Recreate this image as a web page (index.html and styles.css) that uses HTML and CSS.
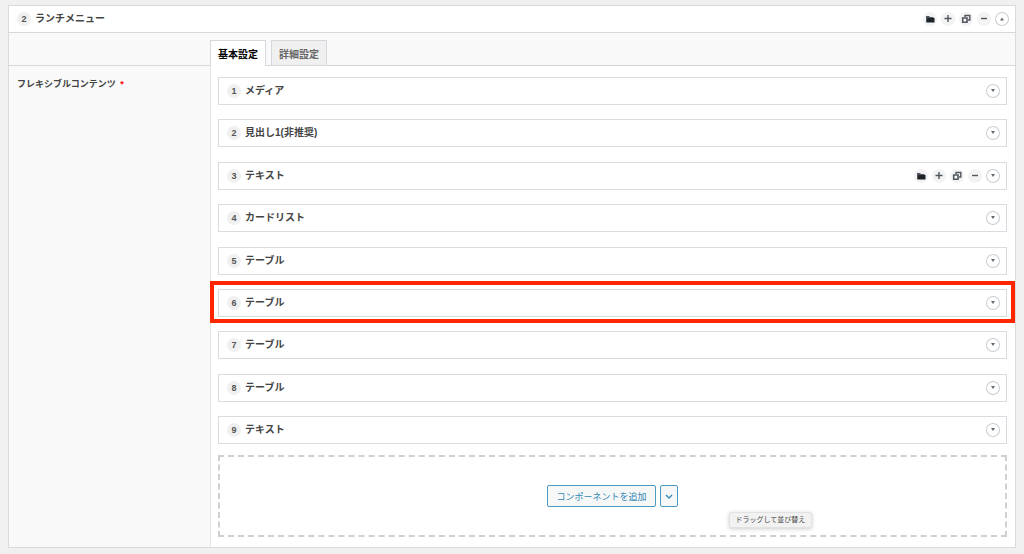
FILE: index.html
```
<!DOCTYPE html>
<html lang="ja">
<head>
    <meta charset="UTF-8" />
    <title>ランチメニュー</title>
    <link rel="stylesheet" href="styles.css">
</head>
<body>
<svg width="0" height="0" class="sprite" aria-hidden="true">
    <symbol id="folder" viewBox="0 0 14 14">
        <path d="M3 4h3l1 1h3.5v1H5v4H3z" fill="#50575e" />
        <path d="M4.5 6H11.5V10.5H3.5z" fill="#1d2327" />
    </symbol>
    <symbol id="plus" viewBox="0 0 14 14">
        <path d="M7 3v7M3.5 6.5h7" stroke="#50575e" stroke-width="1.4" />
    </symbol>
    <symbol id="copy" viewBox="0 0 14 14">
        <path d="M6 5V3.5h4.8V8H9" fill="none" stroke="#50575e" stroke-width="1.4" />
        <path d="M3.7 6h4.3v4.3H3.7z" fill="#fff" stroke="#50575e" stroke-width="1.6" />
    </symbol>
    <symbol id="minus" viewBox="0 0 14 14">
        <path d="M4 6.5h6" stroke="#50575e" stroke-width="1.4" />
    </symbol>
    <symbol id="down" viewBox="0 0 14 14">
        <path d="M5 5h4L7 8z" fill="#646970" />
    </symbol>
    <symbol id="up" viewBox="0 0 14 14">
        <path d="M5 8.5h4L7 5.5z" fill="#646970" />
    </symbol>
</svg>

<main class="layout">
    <header class="layout-header">
        <span class="order">2</span>
        <h2 class="title">ランチメニュー</h2>
        <div class="controls">
            <button type="button" class="icon-btn" aria-label="フォルダ"><svg><use href="#folder" /></svg></button>
            <button type="button" class="icon-btn" aria-label="追加"><svg><use href="#plus" /></svg></button>
            <button type="button" class="icon-btn" aria-label="複製"><svg><use href="#copy" /></svg></button>
            <button type="button" class="icon-btn" aria-label="削除"><svg><use href="#minus" /></svg></button>
            <button type="button" class="icon-btn toggle" aria-label="閉じる"><svg><use href="#up" /></svg></button>
        </div>
    </header>

    <div class="tabs" role="tablist">
        <button type="button" class="tab active" role="tab" aria-selected="true">基本設定</button>
        <button type="button" class="tab" role="tab" aria-selected="false">詳細設定</button>
    </div>

    <div class="field">
        <div class="field-label">フレキシブルコンテンツ <span class="required">*</span></div>
        <div class="field-input">
            <div class="rows">
                <section class="row">
                    <span class="order">1</span>
                    <h3 class="title">メディア</h3>
                    <div class="controls">
                        <button type="button" class="icon-btn toggle" aria-label="開く"><svg><use href="#down" /></svg></button>
                    </div>
                </section>
                <section class="row">
                    <span class="order">2</span>
                    <h3 class="title">見出し1(非推奨)</h3>
                    <div class="controls">
                        <button type="button" class="icon-btn toggle" aria-label="開く"><svg><use href="#down" /></svg></button>
                    </div>
                </section>
                <section class="row">
                    <span class="order">3</span>
                    <h3 class="title">テキスト</h3>
                    <div class="controls">
                        <button type="button" class="icon-btn" aria-label="フォルダ"><svg><use href="#folder" /></svg></button>
                        <button type="button" class="icon-btn" aria-label="追加"><svg><use href="#plus" /></svg></button>
                        <button type="button" class="icon-btn" aria-label="複製"><svg><use href="#copy" /></svg></button>
                        <button type="button" class="icon-btn" aria-label="削除"><svg><use href="#minus" /></svg></button>
                        <button type="button" class="icon-btn toggle" aria-label="開く"><svg><use href="#down" /></svg></button>
                    </div>
                </section>
                <section class="row">
                    <span class="order">4</span>
                    <h3 class="title">カードリスト</h3>
                    <div class="controls">
                        <button type="button" class="icon-btn toggle" aria-label="開く"><svg><use href="#down" /></svg></button>
                    </div>
                </section>
                <section class="row">
                    <span class="order">5</span>
                    <h3 class="title">テーブル</h3>
                    <div class="controls">
                        <button type="button" class="icon-btn toggle" aria-label="開く"><svg><use href="#down" /></svg></button>
                    </div>
                </section>
                <section class="row highlight">
                    <span class="order">6</span>
                    <h3 class="title">テーブル</h3>
                    <div class="controls">
                        <button type="button" class="icon-btn toggle" aria-label="開く"><svg><use href="#down" /></svg></button>
                    </div>
                </section>
                <section class="row">
                    <span class="order">7</span>
                    <h3 class="title">テーブル</h3>
                    <div class="controls">
                        <button type="button" class="icon-btn toggle" aria-label="開く"><svg><use href="#down" /></svg></button>
                    </div>
                </section>
                <section class="row">
                    <span class="order">8</span>
                    <h3 class="title">テーブル</h3>
                    <div class="controls">
                        <button type="button" class="icon-btn toggle" aria-label="開く"><svg><use href="#down" /></svg></button>
                    </div>
                </section>
                <section class="row">
                    <span class="order">9</span>
                    <h3 class="title">テキスト</h3>
                    <div class="controls">
                        <button type="button" class="icon-btn toggle" aria-label="開く"><svg><use href="#down" /></svg></button>
                    </div>
                </section>
            </div>

            <div class="add-area">
                <button type="button" class="add-btn">コンポーネントを追加</button>
                <button type="button" class="add-btn more" aria-label="その他">
                    <svg viewBox="0 0 8 8"><path d="M1 3L4 6 7 3" fill="none" stroke="currentColor" stroke-width="1.3" /></svg>
                </button>
                <div class="tooltip" role="tooltip">ドラッグして並び替え</div>
            </div>
        </div>
    </div>
</main>
</body>
</html>
```

FILE: styles.css
```
* {
    box-sizing: border-box;
}

body {
    margin: 0;
    padding: 5px 8px 6px;
    background: #f0f0f1;
    color: #444;
    font-family: "Liberation Sans", "Noto Sans CJK JP", sans-serif;
    font-size: 10px;
    line-height: 14px;
}

button {
    margin: 0;
    font-family: inherit;
    cursor: pointer;
}

.sprite {
    position: absolute;
}

.layout {
    background: #fff;
    border: 1px solid #d8dadd;
}

.layout-header,
.row {
    display: flex;
    align-items: center;
    gap: 4px;
    height: 28px;
    padding: 0 6px 0 8px;
}

.layout-header {
    height: 27px;
    border-bottom: 1px solid #d5d9dd;
}

.order {
    width: 14px;
    height: 14px;
    border-radius: 50%;
    background: #f0f0f1;
    color: #555;
    font-size: 9px;
    font-weight: bold;
    text-align: center;
}

.title {
    margin: 0;
    font-size: 10px;
    font-weight: bold;
}

.controls {
    display: flex;
    gap: 4px;
    margin-left: auto;
}

.icon-btn {
    width: 14px;
    height: 14px;
    padding: 0;
    border: none;
    border-radius: 50%;
    background: #f3f3f4;
}

.icon-btn svg {
    display: block;
    width: 14px;
    height: 14px;
}

.toggle {
    background: #fff;
    box-shadow: 0 0 0 1px #c9cdd2 inset;
}

.tabs {
    display: flex;
    align-items: flex-end;
    gap: 5px;
    height: 33px;
    padding-left: 201px;
    background: #f9f9f9;
    border-bottom: 1px solid #d5d9dd;
}

.tab {
    height: 25px;
    padding: 0 7px;
    border: 1px solid #d5d9dd;
    border-bottom: none;
    background: #f0f0f1;
    color: #666;
    font-size: 10px;
    font-weight: bold;
}

.tab.active {
    height: 26px;
    margin-bottom: -1px;
    background: #fff;
    color: #000;
}

.field {
    display: grid;
    grid-template-columns: 202px 1fr;
}

.field-label {
    padding: 11px 8px;
    border-right: 1px solid #e5e5e5;
    background: #f9f9f9;
    font-size: 9px;
    font-weight: bold;
}

.required {
    margin-left: 2px;
    color: #f00;
}

.field-input {
    min-width: 0;
    padding: 11px 8px 10px 7px;
}

.rows {
    display: grid;
    align-content: space-between;
    min-height: 367px;
}

.row {
    border: 1px solid #d8dbdf;
}

.highlight {
    position: relative;
}

.highlight::after {
    content: "";
    position: absolute;
    inset: -9px -9px -7px;
    border: 4px solid #ff2600;
    pointer-events: none;
}

.add-area {
    position: relative;
    display: flex;
    align-items: center;
    justify-content: center;
    gap: 4px;
    height: 82px;
    margin-top: 11px;
    border: 2px dashed #d0d0d0;
}

.add-btn {
    height: 22px;
    padding: 0 8px;
    border: 1px solid #4a9cc4;
    border-radius: 2px;
    background: #f6f7f7;
    color: #2f87b5;
    font-size: 9px;
}

.more {
    width: 18px;
    padding: 0 4px;
}

.more svg {
    display: block;
    width: 8px;
    height: 8px;
}

.tooltip {
    position: absolute;
    top: 55px;
    left: calc(50% + 116px);
    padding: 0 6px;
    border: 1px solid #e2e2e2;
    border-radius: 2px;
    background: #f2f2f2;
    box-shadow: 0 1px 4px rgba(0, 0, 0, 0.2);
    font-size: 7px;
    white-space: nowrap;
}
```
